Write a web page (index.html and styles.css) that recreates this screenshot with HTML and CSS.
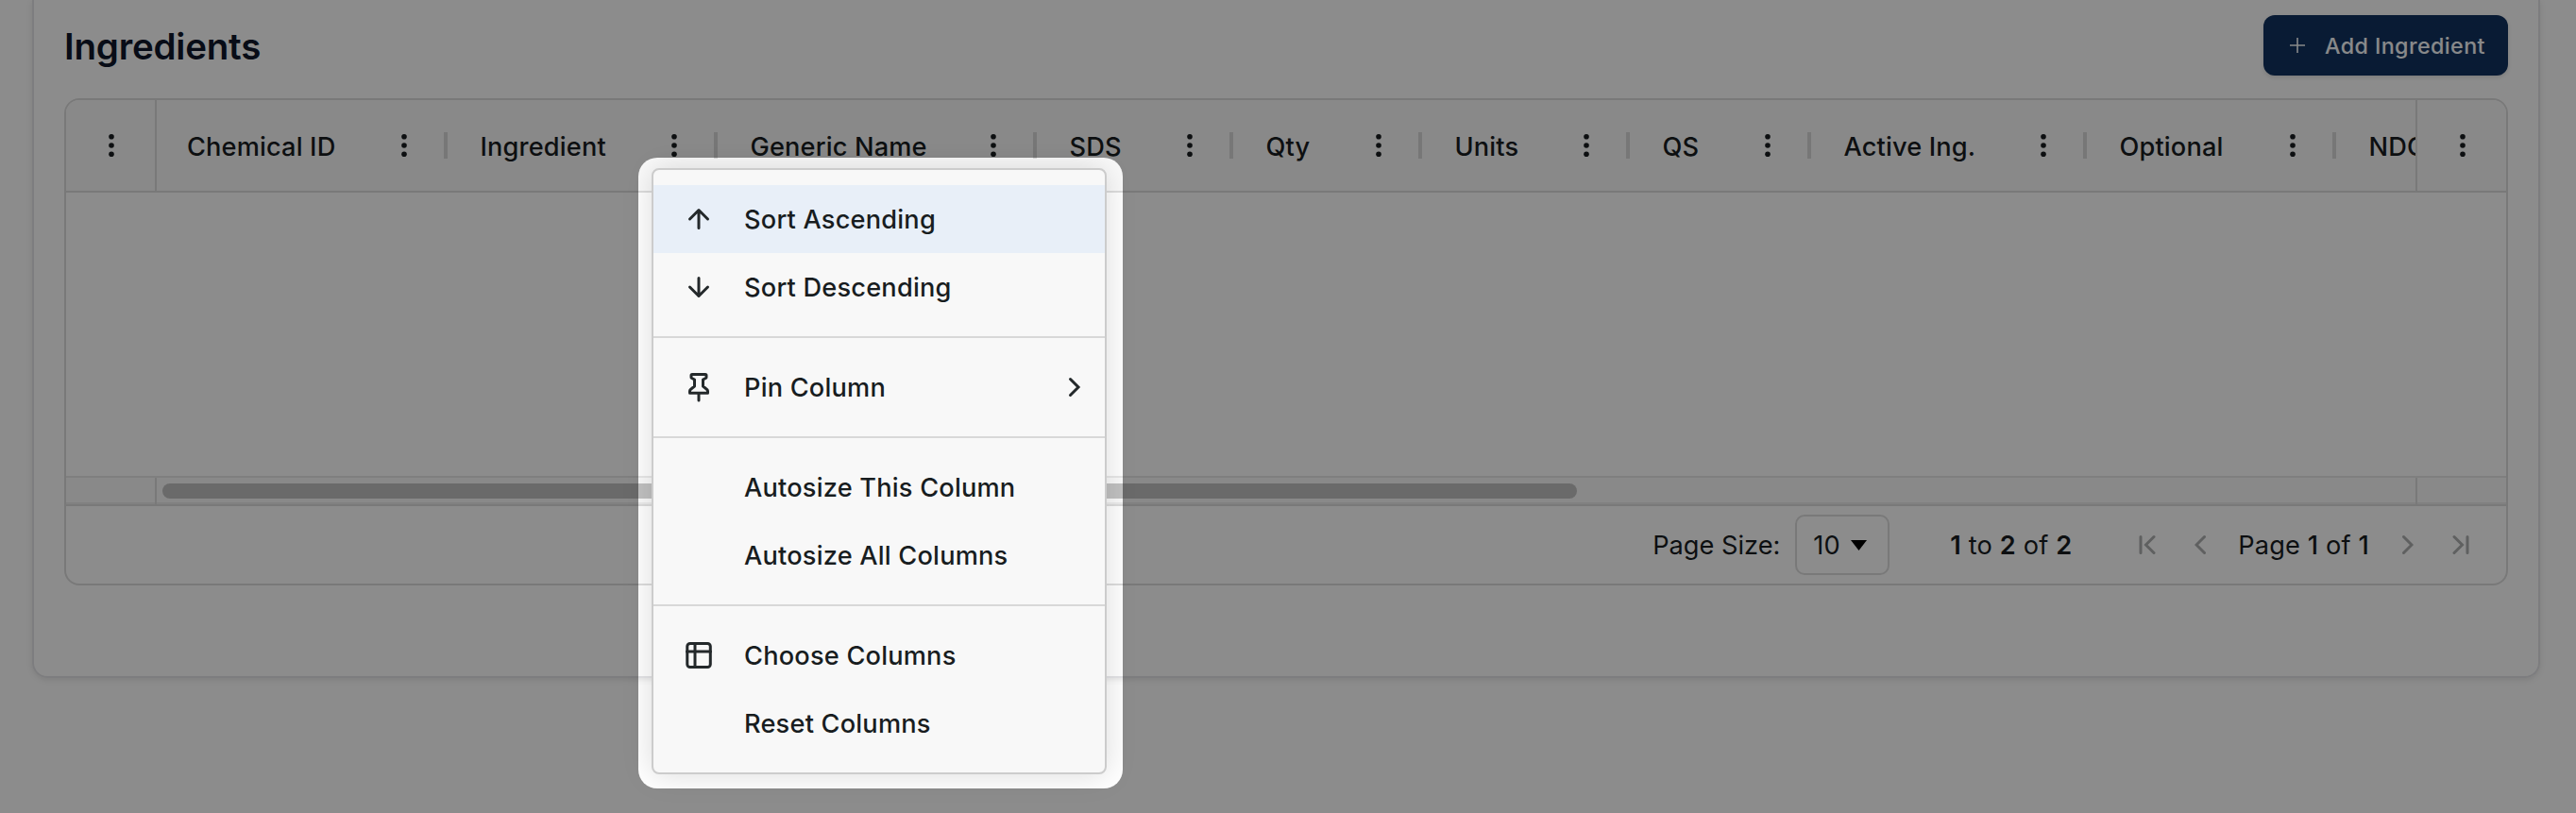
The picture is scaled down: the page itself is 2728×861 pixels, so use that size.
FILE: index.html
```html
<!DOCTYPE html>
<html lang="en">
<head>
  <meta charset="UTF-8">
  <title>Ingredients</title>
  <meta name="viewport" content="width=device-width, initial-scale=1.0">
  <link rel="stylesheet" href="styles.css">
</head>
<body>
  <svg class="sprite" width="0" height="0">
    <symbol id="dots" viewBox="0 0 32 32">
      <circle cx="16" cy="6.7" r="2.8"/><circle cx="16" cy="16" r="2.8"/><circle cx="16" cy="25.3" r="2.8"/>
    </symbol>
  </svg>

  <section class="card">
    <div class="card-head">
      <h2 class="title">Ingredients</h2>
      <button class="add-btn">
        <svg width="16" height="16" viewBox="0 0 16 16"><path d="M8 0v16M0 8h16"/></svg>
        <span>Add Ingredient</span>
      </button>
    </div>

    <div class="grid">
      <div class="grid-header">
        <div class="pin-left"><svg class="dots"><use href="#dots"/></svg></div>
        <div class="columns">
          <div class="col col-chemical"><span>Chemical ID</span><svg class="dots"><use href="#dots"/></svg></div>
          <div class="col col-ingredient"><span>Ingredient</span><svg class="dots"><use href="#dots"/></svg></div>
          <div class="col col-generic"><span>Generic Name</span><svg class="dots"><use href="#dots"/></svg></div>
          <div class="col col-sds"><span>SDS</span><svg class="dots"><use href="#dots"/></svg></div>
          <div class="col col-qty"><span>Qty</span><svg class="dots"><use href="#dots"/></svg></div>
          <div class="col col-units"><span>Units</span><svg class="dots"><use href="#dots"/></svg></div>
          <div class="col col-qs"><span>QS</span><svg class="dots"><use href="#dots"/></svg></div>
          <div class="col col-active"><span>Active Ing.</span><svg class="dots"><use href="#dots"/></svg></div>
          <div class="col col-optional"><span>Optional</span><svg class="dots"><use href="#dots"/></svg></div>
          <div class="col col-ndc"><span>NDC</span></div>
        </div>
        <div class="pin-right"><svg class="dots"><use href="#dots"/></svg></div>
      </div>

      <div class="grid-body"></div>

      <div class="grid-scroll">
        <div class="pin-left"></div>
        <div class="track"><div class="thumb"></div></div>
        <div class="pin-right"></div>
      </div>

      <div class="paging">
        <span class="page-label">Page Size:</span>
        <div class="page-size">
          <span>10</span>
          <svg width="17" height="11" viewBox="0 0 17 11"><path d="M0 0h17L8.5 11z"/></svg>
        </div>
        <span class="summary"><b>1</b> to <b>2</b> of <b>2</b></span>
        <svg class="nav nav-first" width="18" height="22" viewBox="0 0 18 22"><path d="M2 2.5v17M16 2.5L7.5 11l8.500 8.500"/></svg>
        <svg class="nav nav-prev" width="12" height="22" viewBox="0 0 12 22"><path d="M10.500 2.500L2 11l8.500 8.500"/></svg>
        <span class="page-num">Page <b>1</b> of <b>1</b></span>
        <svg class="nav nav-next" width="12" height="22" viewBox="0 0 12 22"><path d="M1.500 2.500L10 11l-8.500 8.500"/></svg>
        <svg class="nav nav-last" width="18" height="22" viewBox="0 0 18 22"><path d="M2 2.500L10.500 11L2 19.500M16 2.500v17"/></svg>
      </div>
    </div>
  </section>

  <!-- column menu -->
  <div class="menu">
    <div class="item active">
      <svg class="icon" viewBox="0 0 32 32"><path d="M16 25.500V7M6.500 16L16 6.500l9.500 9.500"/></svg>
      <span>Sort Ascending</span>
    </div>
    <div class="item">
      <svg class="icon" viewBox="0 0 32 32"><path d="M16 6.500v19M6.500 16l9.500 9.500l9.500-9.500"/></svg>
      <span>Sort Descending</span>
    </div>
    <hr>
    <div class="item">
      <svg class="icon" viewBox="0 0 32 32"><path d="M16 22.500v7.500M9 2.500h14q1 0 1 1v2q0 .7-.6 1L20.500 8v7l4.300 3.600q.7.700.7 1.700v2h-19v-2q0-1 .7-1.700L11.500 15V8L8.600 6.500q-.6-.3-.6-1v-2q0-1 1-1z"/></svg>
      <span>Pin Column</span>
      <svg class="arrow" width="14" height="22" viewBox="0 0 14 22"><path d="M2.500 2.500L11 11l-8.500 8.500"/></svg>
    </div>
    <hr>
    <div class="item"><i class="icon"></i><span>Autosize This Column</span></div>
    <div class="item"><i class="icon"></i><span>Autosize All Columns</span></div>
    <hr>
    <div class="item">
      <svg class="icon" viewBox="0 0 32 32"><rect x="3.800" y="3.500" width="24.500" height="25" rx="3"/><path d="M3.500 12h25M12 3.500v25"/></svg>
      <span>Choose Columns</span>
    </div>
    <div class="item"><i class="icon"></i><span>Reset Columns</span></div>
  </div>

  <!-- dims everything except the menu -->
  <div class="spotlight"></div>
</body>
</html>
```

FILE: styles.css
```css
* {
  box-sizing: border-box;
}
body {
  margin: 0;
  height: 861px;
  overflow: hidden;
  position: relative;
  background: #fff;
  color: #181d1f;
  font-family: Inter, 'Liberation Sans', sans-serif;
  font-size: 27.2px;
}
.sprite {
  display: none;
}
.card {
  margin: 0 38px 0 34px;
  height: 718px;
  padding: 0 32px;
  border: 2px solid #e4e4e7;
  border-top: none;
  border-radius: 0 0 16px 16px;
  box-shadow: 0 2px 6px rgba(0, 0, 0, 0.1);
}
.card-head {
  height: 104px;
  padding-top: 17px;
  display: flex;
  justify-content: space-between;
  align-items: flex-start;
}
.title {
  margin: 0;
  font-size: 38.5px;
  line-height: 64px;
  font-weight: 600;
  letter-spacing: -0.2px;
  color: #0f172a;
}
.add-btn {
  width: 259px;
  height: 64px;
  margin-top: -1px;
  padding: 0 0 0 28px;
  display: flex;
  align-items: center;
  gap: 21px;
  border: none;
  border-radius: 12px;
  background: #12325f;
  color: #f8fafc;
  font-family: inherit;
  font-size: 23.3px;
  font-weight: 500;
  letter-spacing: 0.4px;
  box-shadow: 0 2px 4px rgba(0, 0, 0, 0.12);
}
.add-btn svg {
  fill: none;
  stroke: currentColor;
  stroke-width: 1.6;
}

/* grid */
.grid {
  height: 516px;
  border: 2px solid #dddddd;
  border-radius: 16px;
  overflow: hidden;
  display: flex;
  flex-direction: column;
}
.grid-header {
  height: 98px;
  display: flex;
  background: #fafafa;
  border-bottom: 2px solid #dddddd;
  font-weight: 500;
  letter-spacing: 0.15px;
}
.pin-left, .pin-right {
  width: 96px;
  flex: none;
  display: flex;
  align-items: center;
  justify-content: center;
}
.pin-left {
  padding-left: 2px;
  border-right: 2px solid #dddddd;
}
.pin-right {
  padding-left: 2px;
  border-left: 2px solid #dddddd;
}
.columns {
  flex: 1;
  min-width: 0;
  display: flex;
  overflow: hidden;
}
.dots {
  width: 32px;
  height: 32px;
  flex: none;
  fill: #181d1f;
}
.col {
  flex: none;
  display: flex;
  align-items: center;
  justify-content: space-between;
  padding: 0 30px 0 34.5px;
  white-space: nowrap;
  background: linear-gradient(#d9d9d9, #d9d9d9) no-repeat right 34px / 4px 28px;
}
.col span {
  padding-top: 2px;
}
.col-chemical { width: 308px; padding-left: 32px; }
.col-ingredient { width: 286px; }
.col-generic { width: 338px; }
.col-sds { width: 208px; }
.col-qty { width: 200px; }
.col-units { width: 220px; }
.col-qs { width: 192px; }
.col-active { width: 292px; }
.col-optional { width: 264px; }
.col-ndc { width: 220px; }
.grid-body {
  height: 300px;
}
.grid-scroll {
  height: 32px;
  display: flex;
  background: #fafafa;
  border-top: 2px solid #e8e8e8;
  border-bottom: 2px solid #dddddd;
  box-shadow: inset 0 -2px 0 #ececec;
}
.track {
  flex: 1;
  padding: 6px;
}
.thumb {
  width: 1498px;
  height: 16px;
  border-radius: 8px;
  background: #c1c1c1;
}

/* paging */
.paging {
  flex: 1;
  display: flex;
  align-items: center;
  justify-content: flex-end;
  padding-right: 39px;
}
.paging span {
  padding-top: 1px;
}
.paging b {
  font-weight: 500;
}
.page-size {
  width: 100px;
  height: 64px;
  margin: 0 64px 0 16px;
  padding-left: 17px;
  display: flex;
  align-items: center;
  gap: 11px;
  border: 2px solid #dddddd;
  border-radius: 10px;
}
.summary {
  margin-right: 71px;
  letter-spacing: 0.15px;
}
.paging .summary b {
  font-weight: 600;
}
.nav {
  fill: none;
  stroke: #181d1f;
  stroke-width: 3;
  stroke-linecap: round;
  opacity: 0.35;
}
.nav-first {
  margin-right: 41px;
}
.nav-prev {
  margin-right: 34px;
}
.page-num {
  letter-spacing: 0.15px;
}
.nav-next {
  margin: 0 41px 0 35px;
}

/* menu */
.menu {
  position: absolute;
  left: 690px;
  top: 178px;
  width: 482px;
  height: 642px;
  padding: 16px 0;
  background: #f8f8f8;
  border: 2px solid #cccccc;
  border-radius: 8px;
  box-shadow: 0 0 32px rgba(0, 0, 0, 0.15);
  font-weight: 500;
  letter-spacing: 0.2px;
}
.menu hr {
  height: 2px;
  margin: 16px 0;
  border: none;
  background: #d8d8d8;
}
.item {
  height: 72px;
  padding: 0 25px 0 32px;
  display: flex;
  align-items: center;
}
.item.active {
  background: #e8eff8;
}
.icon {
  width: 32px;
  height: 32px;
  margin-right: 32px;
  fill: none;
  stroke: #24292b;
  stroke-width: 3;
  stroke-linecap: round;
  stroke-linejoin: round;
}
.arrow {
  margin-left: auto;
  fill: none;
  stroke: #24292b;
  stroke-width: 3;
  stroke-linecap: round;
}
.spotlight {
  position: absolute;
  left: 676px;
  top: 167px;
  width: 513px;
  height: 668px;
  border-radius: 20px;
  box-shadow: 0 0 0 3000px rgba(0, 0, 0, 0.45);
}
```
